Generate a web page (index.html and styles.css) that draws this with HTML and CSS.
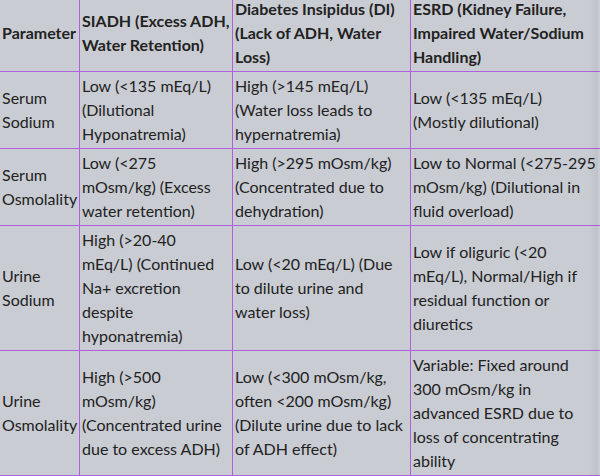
FILE: index.html
```html
<!DOCTYPE html>
<html>
<head>
<meta charset="utf-8">
<link rel="stylesheet" href="styles.css">
</head>
<body>
<div class="wrap">
<table class="cmp">
<colgroup><col class="c1"><col class="c2"><col class="c3"><col class="c4"></colgroup>
<thead>
<tr><th>Parameter</th><th>SIADH (Excess ADH, Water Retention)</th><th>Diabetes Insipidus (DI) (Lack of ADH, Water Loss)</th><th>ESRD (Kidney Failure, Impaired Water/Sodium Handling)</th></tr>
</thead>
<tbody>
<tr><td>Serum Sodium</td><td>Low (&lt;135 mEq/L) (Dilutional Hyponatremia)</td><td>High (&gt;145 mEq/L) (Water loss leads to hypernatremia)</td><td>Low (&lt;135 mEq/L) (Mostly dilutional)</td></tr>
<tr><td>Serum Osmolality</td><td>Low (&lt;275 mOsm/kg) (Excess water retention)</td><td>High (&gt;295 mOsm/kg) (Concentrated due to dehydration)</td><td>Low to Normal (&lt;275-295 mOsm/kg) (Dilutional in fluid overload)</td></tr>
<tr><td>Urine Sodium</td><td>High (&gt;20-40 mEq/L) (Continued Na+ excretion despite hyponatremia)</td><td>Low (&lt;20 mEq/L) (Due to dilute urine and water loss)</td><td>Low if oliguric (&lt;20 mEq/L), Normal/High if residual function or diuretics</td></tr>
<tr><td>Urine Osmolality</td><td>High (&gt;500 mOsm/kg) (Concentrated urine due to excess ADH)</td><td>Low (&lt;300 mOsm/kg, often &lt;200 mOsm/kg) (Dilute urine due to lack of ADH effect)</td><td>Variable: Fixed around 300 mOsm/kg in advanced ESRD due to loss of concentrating ability</td></tr>
</tbody>
</table>
<div class="shade"></div>
</div>
</body>
</html>
```
FILE: styles.css
```css
html, body {
  margin: 0;
  padding: 0;
  background: #c9ccd3;
  overflow: hidden;
}
body {
  font-family: Lato, "Noto Sans", sans-serif;
  font-size: 16px;
  line-height: 24px;
  color: #222222;
}
.wrap {
  position: relative;
  width: 600px;
  height: 476px;
  overflow: hidden;
}
.cmp {
  border-collapse: collapse;
  table-layout: fixed;
  width: 601px;
  margin: -6px 0 0 -1px;
}
.c1 { width: 80px; }
.c2 { width: 153px; }
.c3 { width: 178px; }
.c4 { width: 190px; }
.cmp th, .cmp td {
  border: 1px solid #b060dc;
  vertical-align: middle;
  text-align: left;
}
.cmp th {
  font-weight: 700;
  padding: 2px 1px 2px 2px;
}
.cmp td {
  font-weight: 400;
  padding: 2px 4px 2px 2px;
}
.shade {
  position: absolute;
  top: 0;
  right: 2px;
  width: 10px;
  height: 100%;
  background: linear-gradient(to right, rgba(0,0,0,0), rgba(0,0,0,0.05));
  pointer-events: none;
}
```
